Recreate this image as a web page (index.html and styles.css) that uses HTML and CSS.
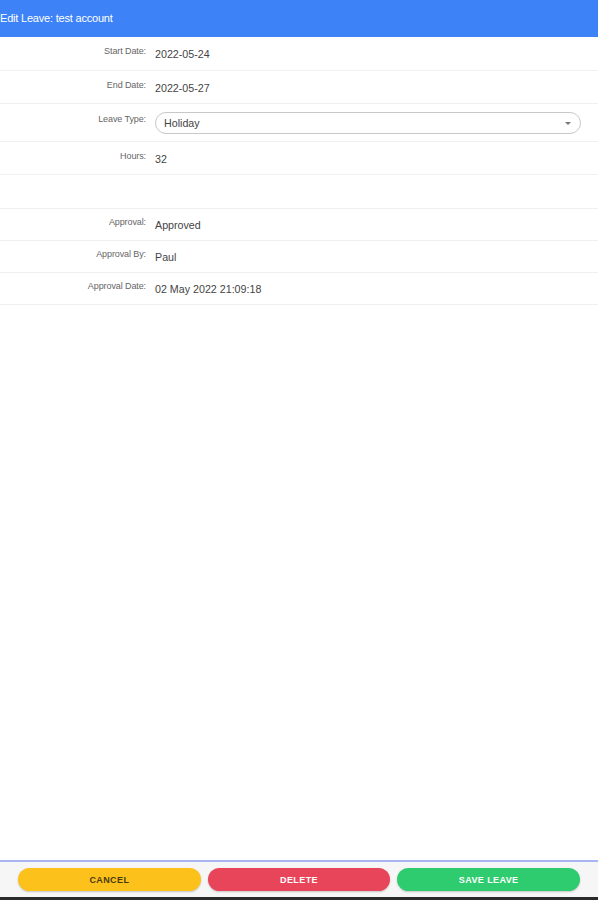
FILE: index.html
```html
<!DOCTYPE html>
<html lang="en">

<head>
    <meta charset="UTF-8">
    <meta name="viewport" content="width=device-width, initial-scale=1.0">
    <title>Edit Leave</title>
    <link rel="stylesheet" href="styles.css">
</head>

<body>
    <div class="page">
        <div class="header">Edit Leave: test account</div>

        <div class="form">
            <div class="row row-start">
                <div class="label">Start Date:</div>
                <div class="value">2022-05-24</div>
            </div>
            <div class="row row-end">
                <div class="label">End Date:</div>
                <div class="value">2022-05-27</div>
            </div>
            <div class="row row-type">
                <div class="label">Leave Type:</div>
                <div class="value">
                    <div class="select">
                        <span>Holiday</span>
                        <span class="arrow"></span>
                    </div>
                </div>
            </div>
            <div class="row row-hours">
                <div class="label">Hours:</div>
                <div class="value">32</div>
            </div>
            <div class="row row-empty"></div>
            <div class="row row-small">
                <div class="label">Approval:</div>
                <div class="value">Approved</div>
            </div>
            <div class="row row-small">
                <div class="label">Approval By:</div>
                <div class="value">Paul</div>
            </div>
            <div class="row row-small">
                <div class="label">Approval Date:</div>
                <div class="value">02 May 2022 21:09:18</div>
            </div>
        </div>

        <!-- Footer buttons -->
        <div class="footer">
            <div class="buttons">
                <button class="btn btn-cancel">CANCEL</button>
                <button class="btn btn-delete">DELETE</button>
                <button class="btn btn-save">SAVE LEAVE</button>
            </div>
        </div>
        <div class="bottom-edge"></div>
    </div>
</body>

</html>
```

FILE: styles.css
```css
body {
    margin: 0;
    font-family: "Liberation Sans", Arial, sans-serif;
    background: white;
}

.page {
    height: 900px;
    display: flex;
    flex-direction: column;
}

.header {
    background: #3d82f7;
    color: white;
    font-size: 11px;
    height: 37px;
    line-height: 37px;
    letter-spacing: -0.2px;
}

.form {
    flex: 1;
}

.row {
    display: grid;
    grid-template-columns: 146px 1fr;
    column-gap: 9px;
    border-bottom: 1.5px solid #f0f0f0;
    box-sizing: border-box;
    padding-top: 9px;
}

.row-start {
    height: 34px;
}

.row-end {
    height: 33px;
}

.row-type {
    height: 38px;
    padding-top: 8px;
}

.row-hours {
    height: 33px;
}

.row-empty {
    height: 34px;
}

.row-small {
    height: 32px;
    padding-top: 8px;
}

.label {
    text-align: right;
    font-size: 9px;
    color: #666;
    letter-spacing: -0.1px;
}

.value {
    font-size: 10.7px;
    color: #444;
    padding-top: 2px;
}

.row-type .label {
    padding-top: 2px;
}

.row-type .value {
    padding-top: 0;
    padding-right: 17px;
}

.select {
    height: 22px;
    border: 1px solid #c8c8c8;
    border-radius: 11px;
    box-sizing: border-box;
    display: flex;
    align-items: center;
    justify-content: space-between;
    padding: 0 9px 0 8px;
}

.arrow {
    width: 0;
    height: 0;
    border-left: 3px solid transparent;
    border-right: 3px solid transparent;
    border-top: 3px solid #777;
}

.footer {
    border-top: 2px solid #a9b4f5;
    background: #f6f6f6;
    padding: 6px 18px;
}

.buttons {
    display: flex;
    gap: 7px;
}

.btn {
    flex: 1;
    height: 23px;
    border: none;
    border-radius: 12px;
    font-family: "Liberation Sans", Arial, sans-serif;
    font-size: 9px;
    font-weight: bold;
    letter-spacing: 0.4px;
    color: white;
    box-shadow: 0 1px 2px rgba(0, 0, 0, 0.2);
    cursor: pointer;
}

.btn-cancel {
    background: #fcc21b;
    color: #4a3a10;
}

.btn-delete {
    background: #e9455a;
}

.btn-save {
    background: #2fcc6f;
}

.bottom-edge {
    height: 3px;
    background: #2a2a2a;
}
```
